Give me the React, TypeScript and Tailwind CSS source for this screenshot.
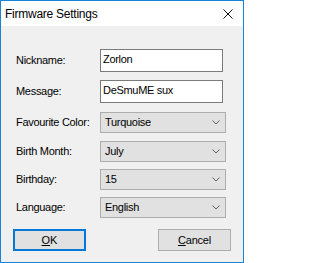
import React from "react";

const font = { fontFamily: '"Liberation Sans", Arial, sans-serif' };

function Chevron() {
  return (
    <svg width="8" height="5" viewBox="0 0 8 5" className="shrink-0">
      <polyline points="0.5,0.5 4,4 7.5,0.5" fill="none" stroke="#606060" strokeWidth="1" />
    </svg>
  );
}

function Label({ children }: { children: React.ReactNode }) {
  return <div className="w-[84px] shrink-0 text-[11px] tracking-[-0.3px] text-black leading-[13px]">{children}</div>;
}

function TextRow({ label, value, mt }: { label: string; value: string; mt: string }) {
  return (
    <div className={`flex items-center ${mt}`}>
      <Label>{label}</Label>
      <div className="w-[123px] h-[23px] border border-[#7a7a7a] bg-white pl-[2px] pb-[2px] flex items-center text-[11px] tracking-[-0.3px] leading-[13px] text-black">
        {value}
      </div>
    </div>
  );
}

function ComboRow({ label, value, mt }: { label: string; value: string; mt: string }) {
  return (
    <div className={`flex items-center ${mt}`}>
      <Label>{label}</Label>
      <div className="w-[126px] h-[21px] border border-[#adadad] bg-[#e1e1e1] pl-[4px] pr-[5px] flex items-center justify-between text-[11px] tracking-[-0.3px] leading-[13px] text-black">
        <span>{value}</span>
        <Chevron />
      </div>
    </div>
  );
}

export default function App() {
  return (
    <div style={font} className="w-[244px] h-[263px] border border-[#1883d7] bg-[#f0f0f0] flex flex-col">
      <div className="h-[25px] bg-white flex items-center justify-between pl-[4px] pr-[10px]">
        <span className="text-[12px] tracking-[-0.25px] text-black leading-[14px]">Firmware Settings</span>
        <svg width="10" height="10" viewBox="0 0 10 10">
          <path d="M0.5 0.5 L9.5 9.5 M9.5 0.5 L0.5 9.5" stroke="#111" strokeWidth="1" fill="none" />
        </svg>
      </div>
      <div className="flex flex-col pl-[15px] pt-[23px]">
        <TextRow label="Nickname:" value="Zorlon" mt="mt-0" />
        <TextRow label="Message:" value="DeSmuME sux" mt="mt-[8px]" />
        <ComboRow label="Favourite Color:" value="Turquoise" mt="mt-[9px]" />
        <ComboRow label="Birth Month:" value="July" mt="mt-[8px]" />
        <ComboRow label="Birthday:" value="15" mt="mt-[7px]" />
        <ComboRow label="Language:" value="English" mt="mt-[7px]" />
      </div>
      <div className="flex justify-between px-[12px] mt-[11px]">
        <div className="w-[73px] h-[22px] border-2 border-[#0078d7] bg-[#e1e1e1] flex items-center justify-center text-[11px] leading-[13px] text-black">
          <span><span className="underline">O</span>K</span>
        </div>
        <div className="w-[73px] h-[22px] border border-[#adadad] bg-[#e1e1e1] flex items-center justify-center text-[11px] tracking-[-0.2px] leading-[13px] text-black">
          <span><span className="underline">C</span>ancel</span>
        </div>
      </div>
    </div>
  );
}
